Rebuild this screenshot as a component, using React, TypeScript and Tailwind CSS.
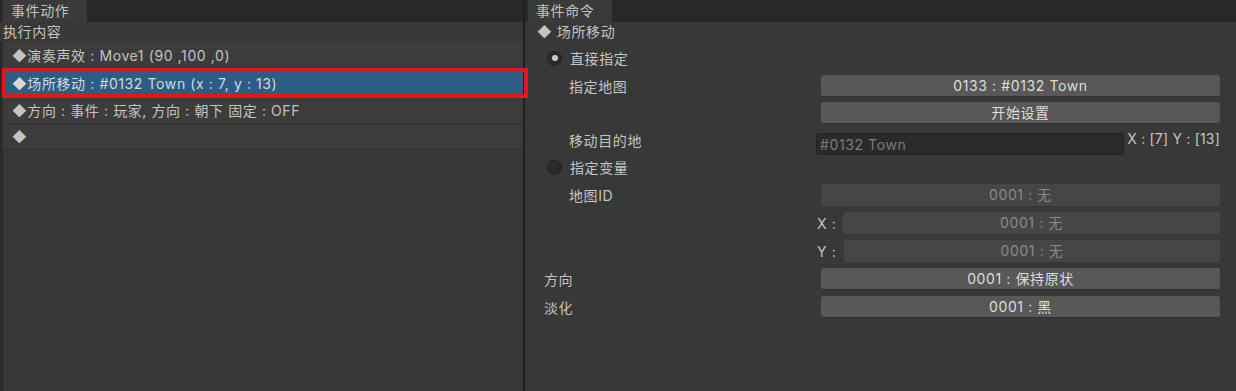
import React from "react";

const font = { fontFamily: '"Inter", "Noto Sans CJK SC", sans-serif' };

function Tab({ label }: { label: string }) {
  return (
    <div className="h-[22px] bg-[#282828] flex items-end">
      <div className="h-[22px] w-[84px] ml-[3px] bg-[#3a3a3a] text-[#c2c2c2] text-[14px] leading-[22px] px-[8px]">
        {label}
      </div>
    </div>
  );
}

function Radio({ on }: { on?: boolean }) {
  return (
    <div className="w-[15px] h-[15px] rounded-full bg-[#2a2a2a] border border-[#222] flex items-center justify-center">
      {on && <div className="w-[6px] h-[6px] rounded-full bg-[#c9c9c9]" />}
    </div>
  );
}

function Btn({ text, dim }: { text: string; dim?: boolean }) {
  return (
    <div
      className={`flex-1 h-[22px] rounded-[3px] text-[14px] leading-[22px] text-center ${
        dim ? "bg-[#464646] text-[#8a8a8a]" : "bg-[#585858] text-[#dedede] border-b border-[#2e2e2e]"
      }`}
    >
      {text}
    </div>
  );
}

export default function App() {
  const rows = [
    "◆演奏声效 : Move1 (90 ,100 ,0)",
    "◆场所移动 : #0132 Town (x : 7, y : 13)",
    "◆方向 : 事件 : 玩家, 方向 : 朝下 固定 : OFF",
    "◆",
  ];

  return (
    <div style={font} className="relative w-[1236px] h-[391px] flex bg-[#383838] text-[#c4c4c4] text-[14px] tracking-[0.6px] overflow-hidden">
      {/* left pane */}
      <div className="w-[523px] flex flex-col">
        <Tab label="事件动作" />
        <div className="h-[20px] leading-[20px] px-[3px]">执行内容</div>
        <div className="flex flex-1">
          <div className="w-[3px] bg-[#2b2b2b]" />
          <div className="flex-1 flex flex-col">
            {rows.map((r, i) => (
              <div
                key={i}
                className={`border-b border-[#2f2f2f] pl-[9px] flex items-center ${
                  i < 2 ? "h-[28px]" : "h-[26px]"
                } ${i === 1 ? "bg-[#2c5d87] text-[#d8d8d8]" : "bg-[#3c3c3c]"}`}
              >
                {r}
              </div>
            ))}
          </div>
        </div>
      </div>

      <div className="w-[2px] bg-[#1f1f1f]" />

      {/* right pane */}
      <div className="flex-1 flex flex-col">
        <Tab label="事件命令" />
        <div className="pr-[16px] flex flex-col">
          <div className="h-[20px] leading-[20px] pl-[12px]">◆ 场所移动</div>

          <div className="mt-[3px] h-[26px] flex items-center pl-[22px] gap-[8px]">
            <Radio on />
            <span>直接指定</span>
          </div>

          <div className="mt-[4px] flex items-center">
            <div className="w-[296px] pl-[44px]">指定地图</div>
            <Btn text="0133 : #0132 Town" />
          </div>

          <div className="mt-[5px] flex items-center">
            <div className="w-[296px]" />
            <Btn text="开始设置" />
          </div>

          <div className="mt-[9px] flex items-center">
            <div className="w-[291px] pl-[44px] self-start leading-[18px] -mt-[1px]">移动目的地</div>
            <div className="w-[308px] h-[22px] rounded-[3px] bg-[#2a2a2a] border border-[#242424] text-[#7c7c7c] leading-[22px] px-[3px]">
              #0132 Town
            </div>
            <div className="flex-1 text-right self-start leading-[14px] -mt-[1px] tracking-[0.2px]">X : [7] Y : [13]</div>
          </div>

          <div className="mt-[1px] h-[22px] flex items-center pl-[22px] gap-[8px]">
            <Radio />
            <span>指定变量</span>
          </div>

          <div className="mt-[6px] flex items-center">
            <div className="w-[296px] pl-[44px]">地图ID</div>
            <Btn text="0001 : 无" dim />
          </div>

          <div className="mt-[6px] flex items-center">
            <div className="w-[318px] pl-[292px]">X :</div>
            <Btn text="0001 : 无" dim />
          </div>

          <div className="mt-[6px] flex items-center">
            <div className="w-[319px] pl-[292px]">Y :</div>
            <Btn text="0001 : 无" dim />
          </div>

          <div className="mt-[6px] flex items-center">
            <div className="w-[296px] pl-[19px]">方向</div>
            <Btn text="0001 : 保持原状" />
          </div>

          <div className="mt-[6px] flex items-center">
            <div className="w-[296px] pl-[19px]">淡化</div>
            <Btn text="0001 : 黑" />
          </div>
        </div>
      </div>

      {/* red highlight annotation */}
      <div className="absolute left-[2px] top-[68px] w-[526px] h-[30px] border-[4px] border-[#e3161e] pointer-events-none" />
    </div>
  );
}
